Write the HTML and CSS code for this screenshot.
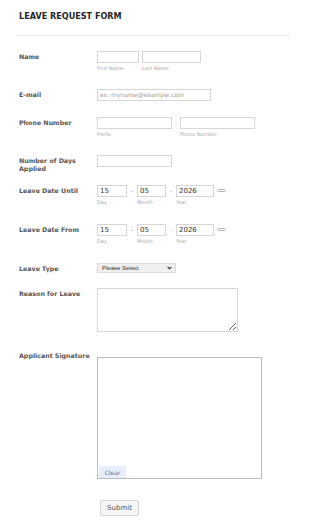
FILE: index.html
```html
<!DOCTYPE html>
<html lang="en">
<head>
<meta charset="utf-8">
<title>Leave Request Form</title>
<link rel="stylesheet" href="styles.css">
</head>
<body>
<div class="page">
  <h1 class="title">LEAVE REQUEST FORM</h1>
  <hr class="divider">
  <ul class="fields">
    <li class="row h38">
      <label class="lbl">Name</label>
      <div class="ctrl gap3">
        <div class="sub-col"><input class="in w42" type="text"><span class="sub">First Name</span></div>
        <div class="sub-col"><input class="in w59" type="text"><span class="sub">Last Name</span></div>
      </div>
    </li>
    <li class="row h28">
      <label class="lbl">E-mail</label>
      <div class="ctrl"><input class="in w114" type="text" placeholder="ex: myname@example.com"></div>
    </li>
    <li class="row h38">
      <label class="lbl">Phone Number</label>
      <div class="ctrl">
        <div class="sub-col"><input class="in w75" type="text"><span class="sub">Prefix</span></div>
        <span class="dash wide">-</span>
        <div class="sub-col"><input class="in w75" type="text"><span class="sub">Phone Number</span></div>
      </div>
    </li>
    <li class="row h30">
      <label class="lbl">Number of Days<br>Applied</label>
      <div class="ctrl"><input class="in w75" type="text"></div>
    </li>
    <li class="row h39">
      <label class="lbl">Leave Date Until</label>
      <div class="ctrl">
        <div class="sub-col"><input class="in w30" type="text" value="15"><span class="sub">Day</span></div>
        <span class="dash">-</span>
        <div class="sub-col"><input class="in w29" type="text" value="05"><span class="sub">Month</span></div>
        <span class="dash">-</span>
        <div class="sub-col"><input class="in w38" type="text" value="2026"><span class="sub">Year</span></div>
        <span class="cal"></span>
      </div>
    </li>
    <li class="row h39">
      <label class="lbl">Leave Date From</label>
      <div class="ctrl">
        <div class="sub-col"><input class="in w30" type="text" value="15"><span class="sub">Day</span></div>
        <span class="dash">-</span>
        <div class="sub-col"><input class="in w29" type="text" value="05"><span class="sub">Month</span></div>
        <span class="dash">-</span>
        <div class="sub-col"><input class="in w38" type="text" value="2026"><span class="sub">Year</span></div>
        <span class="cal"></span>
      </div>
    </li>
    <li class="row h25">
      <label class="lbl">Leave Type</label>
      <div class="ctrl">
        <div class="select">
          <span>Please Select</span>
          <svg class="chev" width="5" height="4" viewBox="0 0 5 4"><path d="M0.6 0.8 L2.5 2.8 L4.4 0.8" fill="none" stroke="#222" stroke-width="1.1"/></svg>
        </div>
      </div>
    </li>
    <li class="row h68">
      <label class="lbl">Reason for Leave</label>
      <div class="ctrl"><textarea class="ta"></textarea></div>
    </li>
    <li class="row sig-row">
      <label class="lbl sig-lbl">Applicant Signature</label>
      <div class="ctrl">
        <div class="sig">
          <button class="clear" type="button">Clear</button>
        </div>
      </div>
    </li>
    <li class="row submit-row">
      <button class="submit" type="submit">Submit</button>
    </li>
  </ul>
</div>
</body>
</html>
```
FILE: styles.css
```css
* { box-sizing: border-box; }
body {
  margin: 0;
  background: #fff;
  font-family: "DejaVu Sans", Verdana, sans-serif;
}
.page {
  width: 310px;
  padding: 11px 19px 0 19px;
}
.title {
  margin: 0;
  font-size: 8.1px;
  line-height: 10px;
  font-weight: bold;
  color: #262626;
}
.divider {
  margin: 14px 0 0 -1px;
  width: 273px;
  height: 0;
  border: 0;
  border-top: 1px solid #ededed;
}
.fields {
  list-style: none;
  margin: 15px 0 0 0;
  padding: 0;
}
.row {
  display: flex;
  align-items: flex-start;
}
.h25 { height: 25px; }
.h28 { height: 28px; }
.h30 { height: 30px; }
.h38 { height: 38px; }
.h39 { height: 39px; }
.h68 { height: 68px; }
.lbl {
  width: 78px;
  flex: none;
  padding-top: 2px;
  font-size: 6.3px;
  line-height: 8px;
  font-weight: bold;
  color: #555;
}
.ctrl {
  display: flex;
  align-items: flex-start;
}
.gap3 { gap: 3px; }
.sub-col {
  display: flex;
  flex-direction: column;
}
.sub {
  margin-top: 2px;
  font-size: 5px;
  line-height: 6px;
  color: #a8a8a8;
}
.in {
  display: block;
  height: 12px;
  margin: 0;
  padding: 0 2px;
  border: 1px solid #d6d6d6;
  border-radius: 0;
  background: #fff;
  font-family: "DejaVu Sans", Verdana, sans-serif;
  font-size: 7px;
  color: #333;
  outline: none;
}
.in::placeholder {
  font-size: 6px;
  color: #9c9c9c;
}
.w29 { width: 29px; }
.w30 { width: 30px; }
.w38 { width: 38px; }
.w42 { width: 42px; }
.w59 { width: 59px; }
.w75 { width: 75px; }
.w114 { width: 114px; }
.dash {
  width: 10px;
  text-align: center;
  font-size: 6px;
  line-height: 12px;
  color: #888;
}
.dash.wide { width: 8px; }
.cal {
  width: 9px;
  height: 3px;
  margin: 4px 0 0 3px;
  border: 1px solid #b8b8b8;
  border-radius: 2px;
}
.select {
  width: 79px;
  height: 10px;
  display: flex;
  align-items: center;
  justify-content: space-between;
  padding: 0 3px 0 4px;
  border: 1px solid #dcdcdc;
  background: #efefef;
  font-family: "Liberation Sans", Arial, sans-serif;
  font-size: 6px;
  color: #333;
}
.chev { display: block; }
.ta {
  display: block;
  width: 141px;
  height: 44px;
  margin: 0;
  padding: 2px;
  border: 1px solid #d6d6d6;
  border-radius: 0;
  font-family: "DejaVu Sans", Verdana, sans-serif;
  font-size: 7px;
}
.sig-row { height: 144px; }
.sig-lbl { margin-top: -4px; padding-top: 0; }
.sig {
  width: 165px;
  height: 122px;
  margin-top: 1px;
  display: flex;
  flex-direction: column;
  justify-content: flex-end;
  align-items: flex-start;
  border: 1px solid #bcbcbc;
  padding: 0 0 0 1px;
}
.clear {
  width: 27px;
  height: 12px;
  margin: 0;
  padding: 0;
  border: 0;
  background: #e6eefb;
  font-family: "DejaVu Sans", Verdana, sans-serif;
  font-size: 6px;
  color: #62749c;
}
.submit-row { padding-left: 81px; }
.submit {
  width: 39px;
  height: 16px;
  margin: 0;
  padding: 0;
  border: 1px solid #d6d6d6;
  border-radius: 2px;
  background: #f5f5f5;
  box-shadow: 0 1px 1px rgba(0,0,0,0.06);
  font-family: "DejaVu Sans", Verdana, sans-serif;
  font-size: 7px;
  color: #555;
}
```
